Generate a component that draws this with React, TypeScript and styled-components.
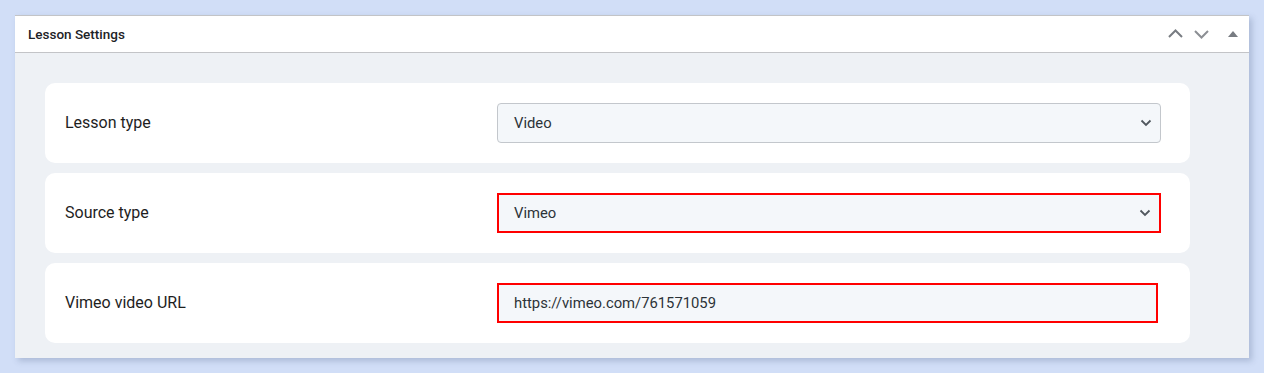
import React from "react";
import styled, { createGlobalStyle } from "styled-components";

const Global = createGlobalStyle`
  html, body { margin: 0; padding: 0; }
  body {
    background: #d1def7;
    font-family: Roboto, "Liberation Sans", Arial, sans-serif;
  }
`;

const Page = styled.div`
  padding: 15px 15px 16px 15px;
`;

const Panel = styled.div`
  width: 1234px;
  background: #fff;
  border-top: 1px solid #c3c4c7;
  box-shadow: 3px 3px 6px rgba(60, 80, 120, 0.25);
`;

const Header = styled.div`
  height: 36px;
  display: flex;
  align-items: center;
  justify-content: space-between;
  padding: 0 11px 0 13px;
  border-bottom: 1px solid #c3c4c7;
`;

const Title = styled.h2`
  margin: 0;
  font-size: 13.5px;
  font-weight: 500;
  color: #1d2327;
`;

const Controls = styled.div`
  display: flex;
  align-items: center;
  gap: 11px;
`;

const IconBtn = styled.span`
  width: 15px;
  height: 17px;
  display: flex;
  align-items: center;
  justify-content: center;
  color: #787c82;
`;

const ToggleBtn = styled(IconBtn)`
  margin-left: 8px;
  width: 10px;
`;

const Body = styled.div`
  background: #eef1f5;
  padding: 30px 59px 15px 30px;
  display: flex;
  flex-direction: column;
  gap: 10px;
`;

const Card = styled.div`
  background: #fff;
  border-radius: 10px;
  height: 80px;
  display: grid;
  grid-template-columns: 432px 1fr;
  align-items: center;
  padding: 0 29px 0 20px;
`;

const Label = styled.div`
  font-size: 16px;
  color: #1e1e1e;
  margin-top: -2px;
`;

const Field = styled.div<{ $error?: boolean; $narrow?: boolean }>`
  height: 40px;
  box-sizing: border-box;
  margin-right: ${(p) => (p.$narrow ? "3px" : "0")};
  border: ${(p) => (p.$error ? "2px solid #ff0000" : "1px solid #c3c7cc")};
  border-radius: ${(p) => (p.$error ? "0" : "4px")};
  background: #f4f7fa;
  display: flex;
  align-items: center;
  justify-content: space-between;
  padding: 0 8px 1px ${(p) => (p.$error ? "15px" : "16px")};
  font-size: 14.8px;
  color: #2c3338;
`;

const Chevron = () => (
  <svg width="12" height="8" viewBox="0 0 12 8">
    <path d="M1.5 1.5 L6 6 L10.5 1.5" fill="none" stroke="#50575e" strokeWidth="1.8" />
  </svg>
);

export default function App() {
  return (
    <>
      <Global />
      <Page>
        <Panel>
          <Header>
            <Title>Lesson Settings</Title>
            <Controls>
              <IconBtn>
                <svg width="15" height="10" viewBox="0 0 15 10">
                  <path d="M1 8 L7.5 1.5 L14 8" fill="none" stroke="#787c82" strokeWidth="2" />
                </svg>
              </IconBtn>
              <IconBtn>
                <svg width="15" height="10" viewBox="0 0 15 10">
                  <path d="M1 2 L7.5 8.5 L14 2" fill="none" stroke="#8c8f94" strokeWidth="2" />
                </svg>
              </IconBtn>
              <ToggleBtn>
                <svg width="10" height="6" viewBox="0 0 10 6">
                  <path d="M0 6 L5 0 L10 6 Z" fill="#787c82" />
                </svg>
              </ToggleBtn>
            </Controls>
          </Header>
          <Body>
            <Card>
              <Label>Lesson type</Label>
              <Field>
                <span>Video</span>
                <Chevron />
              </Field>
            </Card>
            <Card>
              <Label>Source type</Label>
              <Field $error>
                <span>Vimeo</span>
                <Chevron />
              </Field>
            </Card>
            <Card>
              <Label>Vimeo video URL</Label>
              <Field $error $narrow>
                <span>https://vimeo.com/761571059</span>
              </Field>
            </Card>
          </Body>
        </Panel>
      </Page>
    </>
  );
}
